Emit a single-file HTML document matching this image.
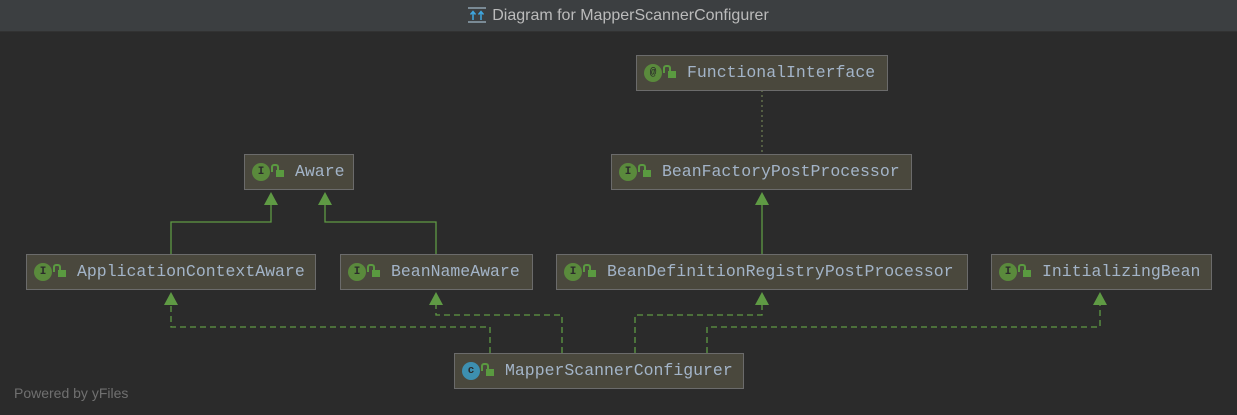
<!DOCTYPE html>
<html><head><style>
body{margin:0;width:1237px;height:415px;background:#2b2b2b;overflow:hidden;position:relative;font-family:"Liberation Sans",sans-serif}
.t{position:absolute;left:0;top:0;width:1237px;height:31px;background:#3c3f41;border-bottom:1px solid #323232;color:#bbbbbb;font-size:16px;line-height:32px;text-align:center}
.b{position:absolute;height:34px;background:#4a483d;border:1px solid #6b6b6b;color:#a3b4c8;font-family:"Liberation Mono",monospace;font-size:16.5px;line-height:34px;box-sizing:content-box}
.b .i{position:absolute;left:7px;top:8px;width:18px;height:18px;border-radius:50%;background:#5a8a3c;color:#2b2b2b;font-size:11px;font-weight:bold;display:flex;align-items:center;justify-content:center;line-height:1}
.b .l{position:absolute;left:31px;top:15px;width:8px;height:7px;background:#5a9a40}
.b .l:before{content:"";position:absolute;left:-5px;top:-6px;width:4px;height:6px;border:2px solid #5a9a40;border-bottom:none;border-radius:3px 3px 0 0}
.b span{position:absolute;left:50px}
svg{position:absolute;left:0;top:0}
.p{position:absolute;left:14px;top:385px;color:#707070;font-size:14px}
</style></head><body>
<div class="t"><svg style="position:relative;display:inline-block;vertical-align:-3px;margin-right:6px" width="18" height="16"><rect x="0" y="0" width="18" height="2" fill="#7a8a95"/><rect x="0" y="14" width="18" height="2" fill="#7a8a95"/><path d="M5 13V5M2.5 7.5L5 4.5L7.5 7.5M13 13V5M10.5 7.5L13 4.5L15.5 7.5" stroke="#3fa7e0" stroke-width="1.5" fill="none"/></svg>Diagram for MapperScannerConfigurer</div>
<svg width="1237" height="415">
<g stroke="#5f9a44" stroke-width="1.3" fill="none">
<path d="M171 254V222H271V205M436 254V222H325V205M762 254V205"/>
<path d="M762 90V154" stroke-dasharray="2 3" stroke="#6a7a50"/>
<path d="M490 353V327H171V305M562 353V315H436V305M635 353V315H762V305M707 353V327H1100V305" stroke-dasharray="6 4"/>
</g>
<g fill="#5f9a44">
<path d="M271 192l-7 13h14zM325 192l-7 13h14zM762 192l-7 13h14zM171 292l-7 13h14zM436 292l-7 13h14zM762 292l-7 13h14zM1100 292l-7 13h14z"/>
</g>
</svg>
<div class="b" style="left:636px;top:55px;width:250px"><div class="i">@</div><div class="l"></div><span>FunctionalInterface</span></div>
<div class="b" style="left:244px;top:154px;width:108px"><div class="i">I</div><div class="l"></div><span>Aware</span></div>
<div class="b" style="left:611px;top:154px;width:299px"><div class="i">I</div><div class="l"></div><span>BeanFactoryPostProcessor</span></div>
<div class="b" style="left:26px;top:254px;width:288px"><div class="i">I</div><div class="l"></div><span>ApplicationContextAware</span></div>
<div class="b" style="left:340px;top:254px;width:191px"><div class="i">I</div><div class="l"></div><span>BeanNameAware</span></div>
<div class="b" style="left:556px;top:254px;width:410px"><div class="i">I</div><div class="l"></div><span>BeanDefinitionRegistryPostProcessor</span></div>
<div class="b" style="left:991px;top:254px;width:219px"><div class="i">I</div><div class="l"></div><span>InitializingBean</span></div>
<div class="b" style="left:454px;top:353px;width:288px"><div class="i" style="background:#3d8fb0">c</div><div class="l"></div><span>MapperScannerConfigurer</span></div>
<div class="p">Powered by yFiles</div>
</body></html>
